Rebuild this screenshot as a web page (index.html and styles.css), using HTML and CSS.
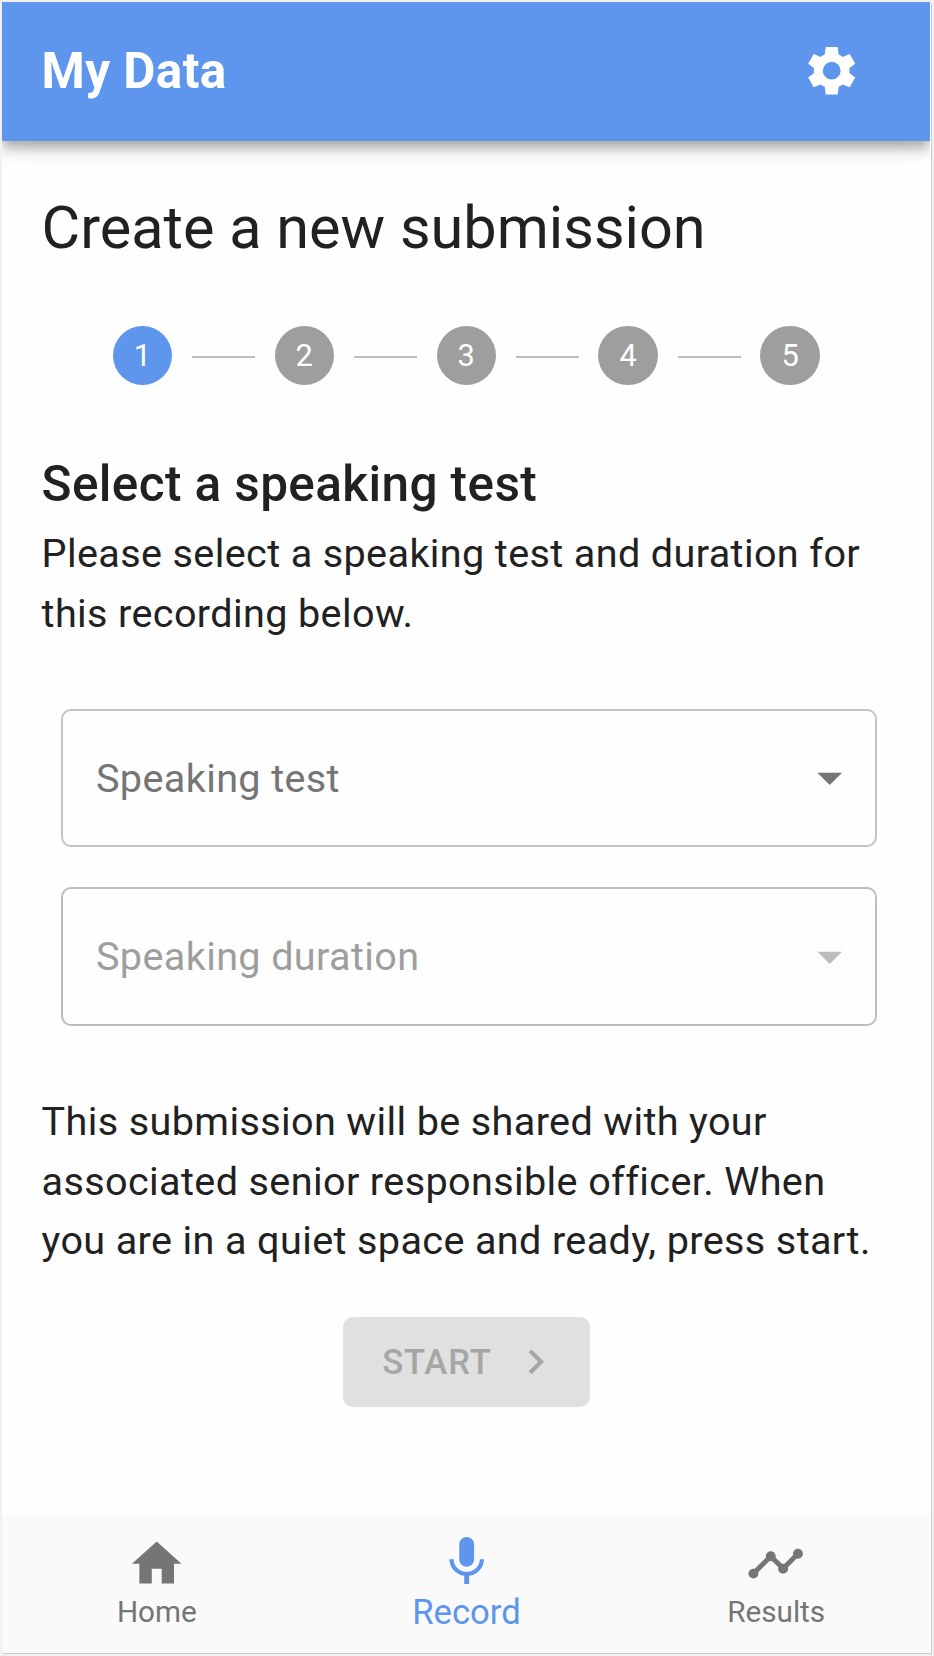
FILE: index.html
```html
<!DOCTYPE html>
<html lang="en">
<head>
<meta charset="utf-8">
<title>My Data</title>
<link rel="stylesheet" href="styles.css">
</head>
<body>
<div class="app">
  <header class="app-bar">
    <h1 class="app-title">My Data</h1>
    <svg class="icon gear" viewBox="0 0 24 24"><path d="M19.14 12.94c.04-.3.06-.61.06-.94 0-.32-.02-.64-.07-.94l2.39-1.86-2.26-3.9-2.82 1.13c-.5-.39-1.03-.7-1.62-.94L14.4 2.4H9.6l-.42 3.09c-.59.24-1.13.57-1.62.94L4.74 5.3 2.48 9.2l2.39 1.86c-.05.3-.07.63-.07.94s.02.64.07.94L2.48 14.8l2.26 3.9 2.82-1.13c.5.38 1.03.7 1.62.94l.42 3.09h4.8l.42-3.09c.59-.24 1.13-.56 1.62-.94l2.82 1.13 2.26-3.9zM12 15.6A3.6 3.6 0 1 1 12 8.4a3.6 3.6 0 0 1 0 7.2z"/></svg>
  </header>
  <main class="content">
    <h2 class="page-title">Create a new submission</h2>
    <div class="stepper">
      <span class="step step-active">1</span><span class="line"></span>
      <span class="step">2</span><span class="line"></span>
      <span class="step">3</span><span class="line"></span>
      <span class="step">4</span><span class="line"></span>
      <span class="step">5</span>
    </div>
    <h3 class="section-title">Select a speaking test</h3>
    <p class="text">Please select a speaking test and duration for this recording below.</p>
    <div class="fields">
      <div class="select"><span>Speaking test</span><svg class="icon arrow" viewBox="0 0 24 24"><path d="M7 10l5 5 5-5z"/></svg></div>
      <div class="select select-disabled"><span>Speaking duration</span><svg class="icon arrow" viewBox="0 0 24 24"><path d="M7 10l5 5 5-5z"/></svg></div>
    </div>
    <p class="text">This submission will be shared with your associated senior responsible officer. When you are in a quiet space and ready, press start.</p>
    <button class="start" disabled><span>START</span><svg class="next" viewBox="0 0 24 24"><path d="M10 6L8.59 7.41 13.17 12l-4.58 4.59L10 18l6-6z"/></svg></button>
  </main>
  <nav class="bottom-nav">
    <a class="nav-item"><svg class="icon" viewBox="0 0 24 24"><path d="M10 20v-6h4v6h5v-8h3L12 3 2 12h3v8z"/></svg><span>Home</span></a>
    <a class="nav-item nav-active"><svg class="icon" viewBox="0 0 24 24"><path d="M12 14c1.66 0 2.99-1.34 2.99-3L15 5c0-1.66-1.34-3-3-3S9 3.34 9 5v6c0 1.66 1.34 3 3 3zm5.3-3c0 3-2.54 5.1-5.3 5.1S6.7 14 6.7 11H5c0 3.41 2.72 6.23 6 6.72V21h2v-3.28c3.28-.48 6-3.3 6-6.72h-1.7z"/></svg><span>Record</span></a>
    <a class="nav-item"><svg class="icon" viewBox="0 0 24 24"><path d="M23 8c0 1.1-.9 2-2 2-.18 0-.35-.02-.51-.07l-3.56 3.55c.05.16.07.34.07.52 0 1.1-.9 2-2 2s-2-.9-2-2c0-.18.02-.36.07-.52l-2.55-2.55c-.16.05-.34.07-.52.07s-.36-.02-.52-.07l-4.55 4.56c.05.16.07.33.07.51 0 1.1-.9 2-2 2s-2-.9-2-2 .9-2 2-2c.18 0 .35.02.51.07l4.56-4.55C8.02 9.36 8 9.18 8 9c0-1.1.9-2 2-2s2 .9 2 2c0 .18-.02.36-.07.52l2.55 2.55c.16-.05.34-.07.52-.07s.36.02.52.07l3.55-3.56C19.02 8.35 19 8.18 19 8c0-1.1.9-2 2-2s2 .9 2 2z"/></svg><span>Results</span></a>
  </nav>
</div>
</body>
</html>
```

FILE: styles.css
```css
* { box-sizing: border-box; }
html { background: #f1f1f1; }
body {
  margin: 0;
  padding: 2px 3px 3px 2px;
  height: 1656px;
  font-family: Roboto, "Liberation Sans", sans-serif;
  color: #212121;
  overflow: hidden;
}
h1, h2, h3, p { margin: 0; }
svg { display: block; flex: none; fill: currentColor; }
.app {
  display: flex;
  flex-direction: column;
  height: 1651px;
  background: #fefefe;
  padding-right: 1px;
  box-shadow: 1px 1px 0 #ccc;
}
.app-bar {
  display: flex;
  align-items: center;
  justify-content: space-between;
  height: 138.6px;
  flex: none;
  padding: 0 69px 0 39.6px;
  background: #5e95ed;
  color: #fff;
  box-shadow: 0 5px 10px -2px rgba(0, 0, 0, .2), 0 10px 12px rgba(0, 0, 0, .14), 0 2px 25px rgba(0, 0, 0, .12);
  clip-path: inset(0 0 -50px 0);
}
.app-title { font-size: 49.5px; font-weight: 700; line-height: 79px; letter-spacing: .0075em; }
.icon { width: 59.4px; height: 59.4px; }
.gear { margin-bottom: 1px; }
.content { display: flex; flex-direction: column; flex: 1; padding: 48.4px 39.6px 0; }
.page-title { font-size: 59.4px; font-weight: 400; line-height: 79px; white-space: nowrap; }
.stepper {
  display: flex;
  align-items: center;
  gap: 19.8px;
  margin: 58px 70.6px 0 71px;
}
.step {
  width: 59.4px;
  height: 59.4px;
  border-radius: 50%;
  background: #9e9e9e;
  color: #fff;
  font-size: 30.8px;
  line-height: 59px;
  text-align: center;
}
.step-active { background: #5e95ed; }
.line { flex: 1; height: 2px; background: #bdbdbd; margin-top: 2px; }
.section-title { margin-top: 60px; font-size: 49.5px; font-weight: 500; line-height: 79px; letter-spacing: .0078em; }
.text { font-size: 39.6px; line-height: 59.4px; letter-spacing: .00938em; }
.fields { display: grid; gap: 39.6px; margin: 65.6px 13px 66.6px 19.8px; }
.select {
  display: flex;
  align-items: center;
  justify-content: space-between;
  height: 138.6px;
  padding: 0 16px 0 32.6px;
  border: 2px solid #c4c4c4;
  border-radius: 9.9px;
  color: #757575;
  font-size: 39.6px;
  letter-spacing: .00938em;
}
.select-disabled { border-color: #bdbdbd; color: #9e9e9e; }
.select-disabled .arrow { color: #bdbdbd; }
.start {
  display: flex;
  align-items: center;
  align-self: center;
  gap: 19.8px;
  height: 90px;
  width: 247.5px;
  margin-top: 46.7px;
  margin-left: .6px;
  padding: 0 31.8px 0 39.6px;
  border: 0;
  border-radius: 9.9px;
  background: #e0e0e0;
  color: #a6a6a6;
  font: 500 34.65px/60px Roboto, "Liberation Sans", sans-serif;
  letter-spacing: .025em;
  justify-content: space-between;
}
.next { width: 49.5px; height: 49.5px; }
.bottom-nav { display: grid; grid-template-columns: repeat(3, 1fr); height: 138.4px; flex: none; margin-right: -1px; background: #fafafa; }
.nav-item { display: flex; flex-direction: column; align-items: center; padding-top: 19.2px; color: #757575; font-size: 29.7px; line-height: 37.4px; }
.nav-active { padding-top: 17px; color: #5e95ed; font-size: 34.65px; line-height: 42px; }
```
